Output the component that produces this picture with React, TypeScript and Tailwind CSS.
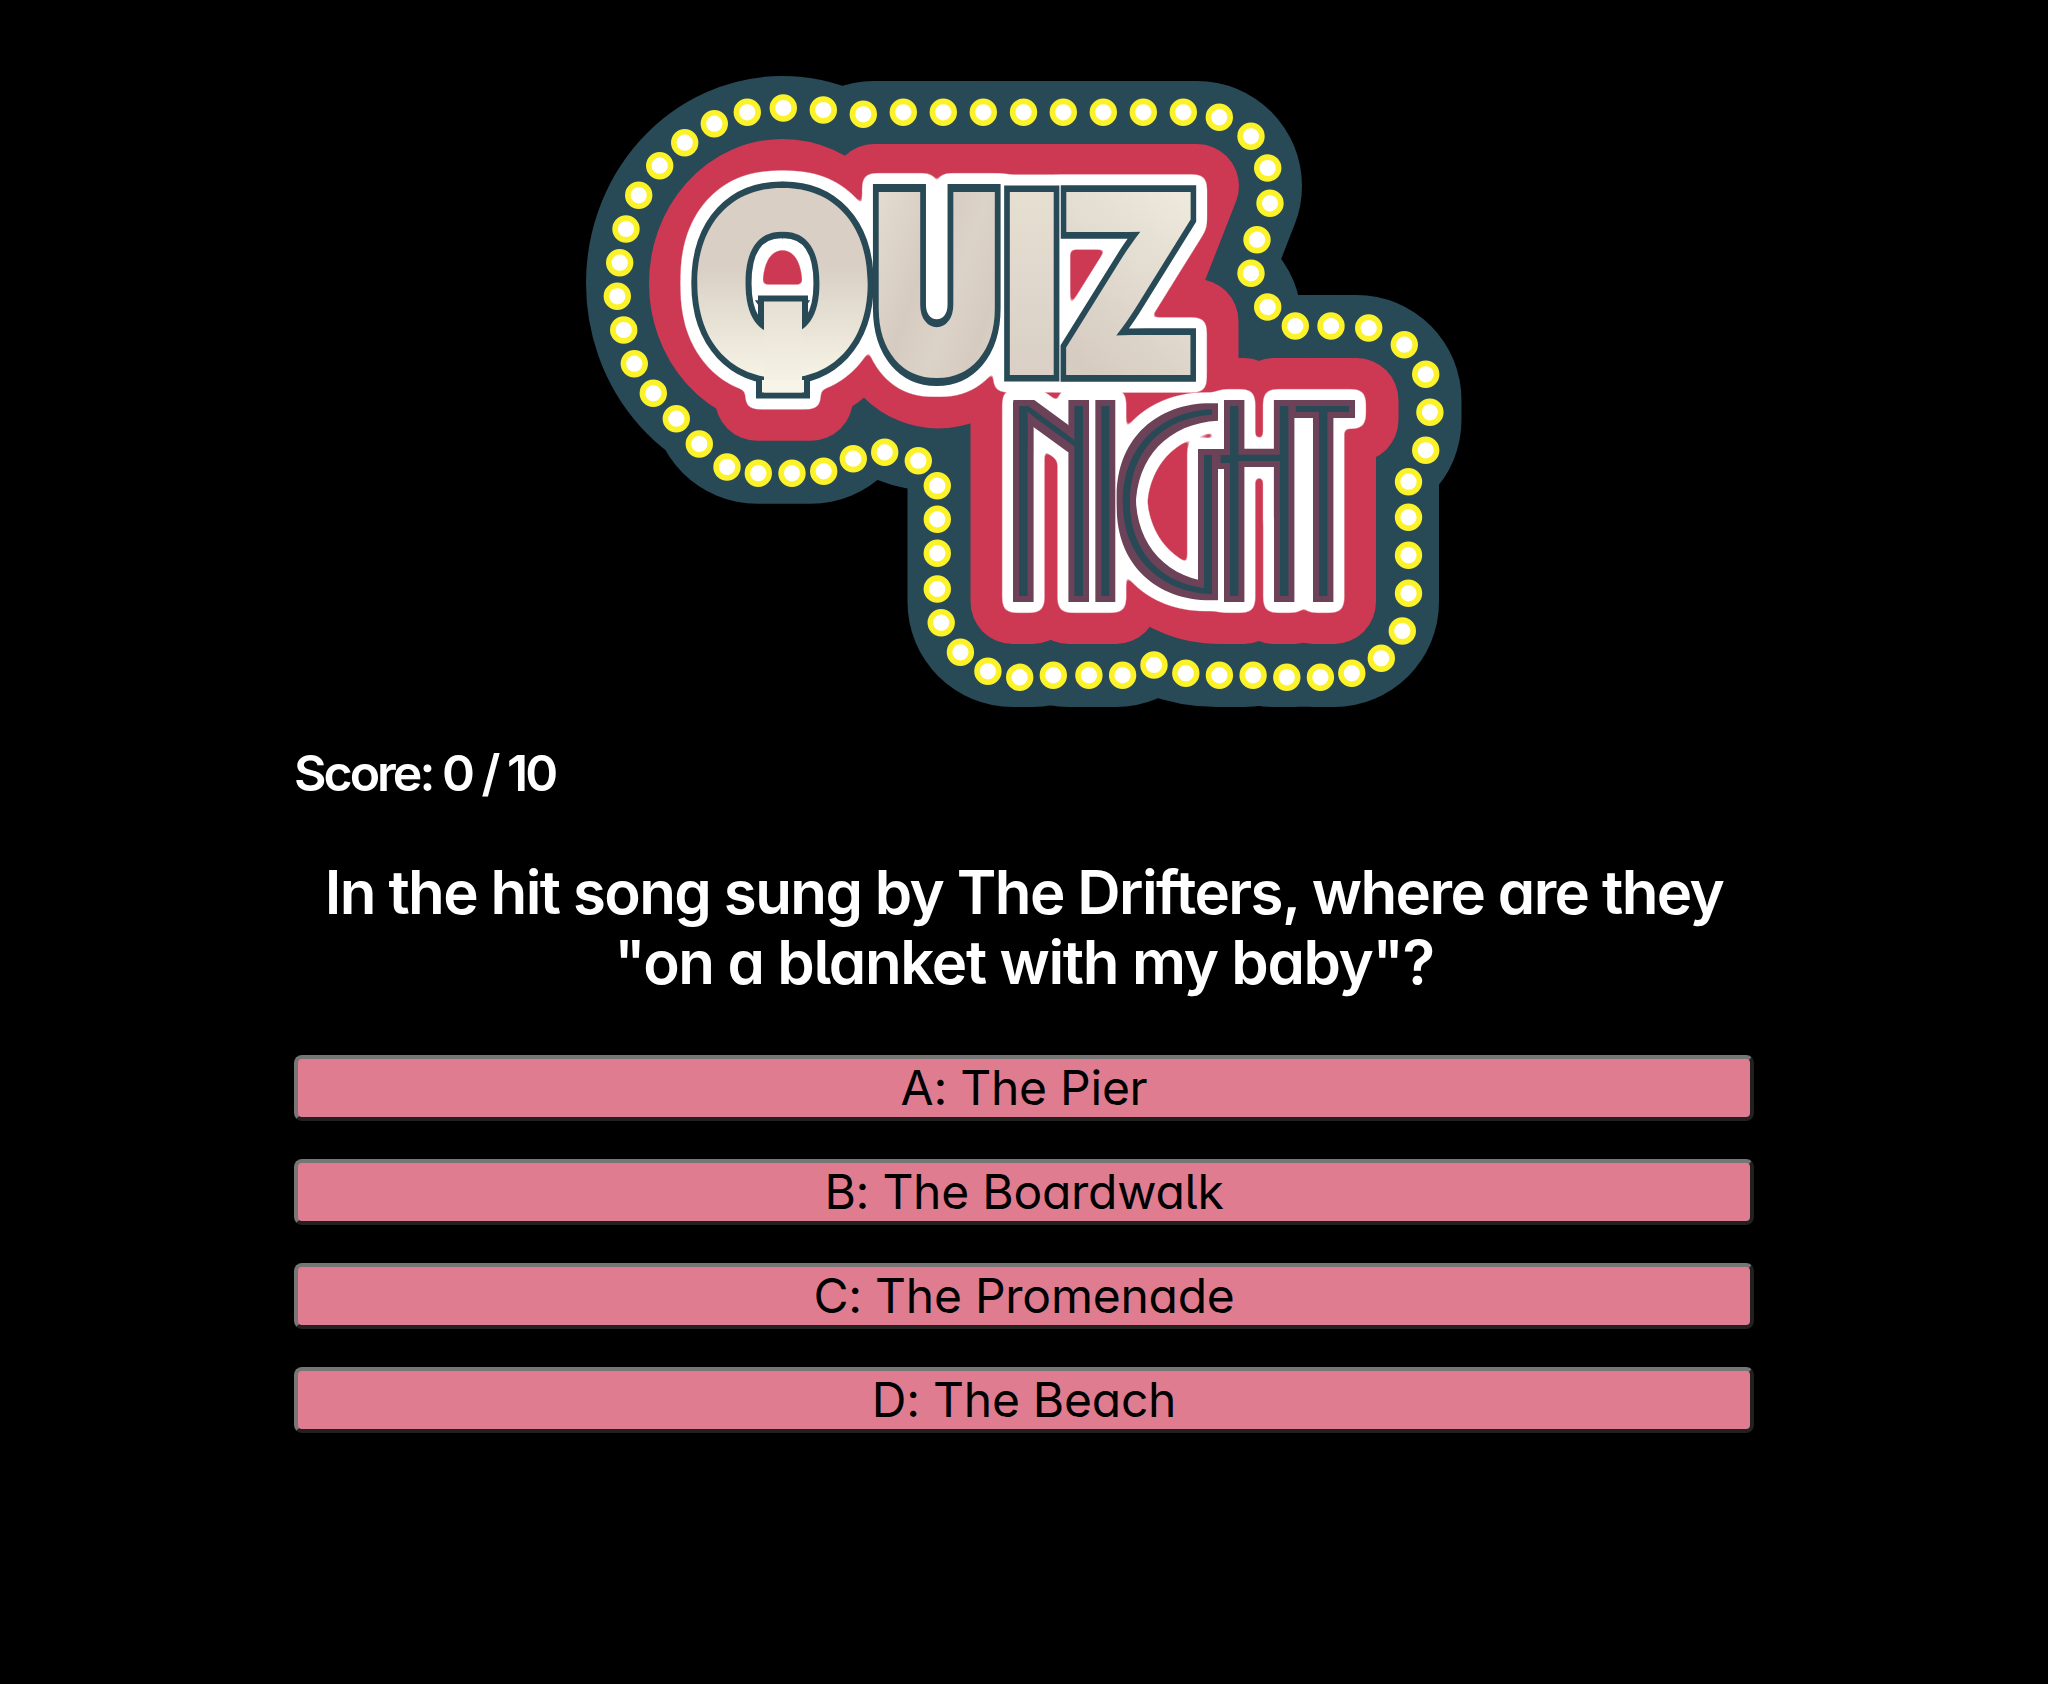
import React from "react";

const answers = ["A: The Pier", "B: The Boardwalk", "C: The Promenade", "D: The Beach"];

const bulbs: [number, number][] = [
  [783.3, 108], [823.3, 110], [863.3, 114.3], [903.3, 112.3], [943.3, 112.3], [983.3, 112.3], [1023.5, 112.3],
  [1063.3, 112.3], [1103.3, 112.3], [1143.3, 112.3], [1183.3, 112.3], [1219.3, 117.3], [1251, 136.3], [1267.7, 168],
  [1270, 203.3], [1257, 239.7], [1251, 273.3], [1267.7, 307], [1295.3, 326], [1331, 326], [1368.7, 328],
  [1404.3, 344.7], [1425.7, 374.3], [1429.9, 412.3], [1425.7, 450.3], [1408.5, 481.7], [1408.5, 517.3],
  [1408.5, 555.3], [1408.5, 593.3], [1402.3, 631], [1381.3, 658.3], [1351.8, 673.3], [1320.4, 677.3],
  [1286.8, 677.3], [1253.1, 675.3], [1219.4, 675.3], [1185.8, 673.3], [1154, 665], [1122.6, 675.3],
  [1088.9, 675.3], [1053.3, 675.3], [1019.7, 677.3], [987.9, 671.3], [960.4, 652.3], [941.2, 622.7],
  [937.3, 589], [937.3, 553.3], [937.3, 519.3], [937.3, 485.7], [918.3, 460.7], [884.7, 452.3], [853.3, 458.7],
  [823.7, 471.3], [792, 473.3], [758.3, 473.3], [727, 467], [699.3, 444], [676.3, 418.7], [653.3, 393.3],
  [634.3, 363.7], [623.7, 330], [617.3, 296.3], [619.7, 262.7], [626, 229], [638.7, 195.3], [659.7, 165.7],
  [684.7, 142.7], [714.3, 123.7], [747.3, 112.3],
];

function Logo() {
  return (
    <svg className="block h-[634px] w-[880px] font-[Inter,sans-serif]" viewBox="584 75 880 634" role="img" aria-label="Quiz Night">
      <defs>
        <g id="sign" strokeLinejoin="round">
          <ellipse cx="782.5" cy="283.3" rx="91.5" ry="102.3" />
          <rect x="757" y="290" width="54" height="108.7" />
          <path d="M874 186H1003V321A64.5 65.5 0 0 1 874 321Z" />
          <path d="M1004 186H1197L1144 321H1196.5V381.3H1004Z" />
          <rect x="1012.5" y="396" width="20" height="206" />
          <rect x="1068.7" y="400" width="47.3" height="202" />
          <ellipse cx="1218" cy="501" rx="102" ry="101" />
          <rect x="1224" y="400" width="20" height="202" />
          <rect x="1274" y="400" width="20" height="202" />
          <rect x="1294" y="400" width="62.5" height="20" />
          <rect x="1313.5" y="400" width="20.5" height="202" />
        </g>
        <linearGradient id="gQ" gradientUnits="userSpaceOnUse" x1="0" y1="-188" x2="0" y2="6">
          <stop offset="0" stopColor="#d9cfc5" />
          <stop offset="0.4" stopColor="#d9cfc4" />
          <stop offset="1" stopColor="#f7f5e7" />
        </linearGradient>
        <linearGradient id="gTail" x1="0" y1="0" x2="0" y2="1">
          <stop offset="0" stopColor="#e6dfd3" />
          <stop offset="1" stopColor="#f7f5e7" />
        </linearGradient>
        <linearGradient id="gU" x1="0" y1="0.1" x2="1" y2="0.9">
          <stop offset="0" stopColor="#e6dfd3" />
          <stop offset="0.4" stopColor="#d6cbc1" />
          <stop offset="0.6" stopColor="#dcd3c8" />
          <stop offset="0.8" stopColor="#d6cbc1" />
          <stop offset="1" stopColor="#ded6ca" />
        </linearGradient>
        <linearGradient id="gI" x1="0" y1="0" x2="0" y2="1">
          <stop offset="0" stopColor="#e9e4d6" />
          <stop offset="1" stopColor="#d6cbc1" />
        </linearGradient>
        <linearGradient id="gZ" x1="0.7" y1="0" x2="0.3" y2="1">
          <stop offset="0" stopColor="#f1eee0" />
          <stop offset="0.85" stopColor="#d6cbc1" />
          <stop offset="1" stopColor="#dcd3c8" />
        </linearGradient>
        <text id="u" transform="translate(874.2 371) scale(.725 1)" fontSize="239" fontWeight="900">U</text>
        <clipPath id="leftHalf">
          <rect x="650" y="150" width="133" height="270" />
        </clipPath>
        <clipPath id="crescent">
          <rect x="1100" y="390" width="112" height="230" />
        </clipPath>
        <filter id="quizGlow" filterUnits="userSpaceOnUse" x="640" y="140" width="620" height="300" colorInterpolationFilters="sRGB">
          <feMorphology in="SourceAlpha" operator="dilate" radius="5" />
          <feGaussianBlur stdDeviation="4.6" />
          <feComponentTransfer result="edge">
            <feFuncR type="discrete" tableValues="1" />
            <feFuncG type="discrete" tableValues="1" />
            <feFuncB type="discrete" tableValues="1" />
            <feFuncA type="linear" slope="20" intercept="-1.5" />
          </feComponentTransfer>
          <feMerge>
            <feMergeNode in="edge" />
            <feMergeNode in="SourceGraphic" />
          </feMerge>
        </filter>
        <filter id="nightGlow" filterUnits="userSpaceOnUse" x="960" y="340" width="460" height="320" colorInterpolationFilters="sRGB">
          <feMorphology in="SourceAlpha" operator="dilate" radius="6" result="fat" />
          <feFlood floodColor="#6c4258" />
          <feComposite in2="fat" operator="in" result="rim" />
          <feMorphology in="fat" operator="dilate" radius="5" />
          <feGaussianBlur stdDeviation="4.6" />
          <feComponentTransfer result="edge">
            <feFuncR type="discrete" tableValues="1" />
            <feFuncG type="discrete" tableValues="1" />
            <feFuncB type="discrete" tableValues="1" />
            <feFuncA type="linear" slope="20" intercept="-1.5" />
          </feComponentTransfer>
          <feMerge>
            <feMergeNode in="edge" />
            <feMergeNode in="rim" />
            <feMergeNode in="SourceGraphic" />
          </feMerge>
        </filter>
      </defs>

      <use href="#sign" fill="#284956" stroke="#284956" strokeWidth="210" />
      <use href="#sign" fill="#cd3853" stroke="#cd3853" strokeWidth="84" />

      {bulbs.map(([x, y], i) => (
        <circle key={i} cx={x} cy={y} r="10.9" fill="#fff" stroke="#fbf22a" strokeWidth="5.6" />
      ))}

      <g filter="url(#nightGlow)" fill="#284956" fontSize="261">
        <text transform="translate(1008.6 446) scale(.43 .21)" fontWeight="300">N</text>
        <rect x="1019" y="408" width="8.6" height="188" />
        <rect x="1074.4" y="406" width="8.6" height="190" />
        <text transform="translate(1090.3 596) scale(.44 1)" fontWeight="300">I</text>
        <g clipPath="url(#crescent)">
          <text transform="translate(1100 592) scale(1.27 1)" fontSize="248" fontWeight="100">G</text>
        </g>
        <rect x="1204" y="455" width="8" height="138" />
        <text transform="translate(1221.7 512) scale(.38 .558)" fontWeight="200">H</text>
        <rect x="1220.6" y="455" width="10" height="8" />
        <rect x="1230" y="406" width="8.4" height="190" />
        <rect x="1280" y="406" width="8.4" height="190" />
        <text transform="translate(1289.2 596) scale(.414 1)" fontWeight="100">T</text>
        <rect x="1319" y="408" width="8.4" height="188" />
      </g>

      <g filter="url(#quizGlow)" fontWeight="900" stroke="#284956" paintOrder="stroke">
        <rect x="764" y="301.5" width="38" height="90" strokeWidth="12" />
        <rect x="762" y="370" width="42" height="22.5" strokeWidth="12" />
        <g id="bowl" clipPath="url(#leftHalf)">
          <text transform="translate(689.2 376) scale(.93 1)" fontSize="255" strokeWidth="13" fill="url(#gQ)">Q</text>
        </g>
        <use href="#bowl" transform="translate(1565 0) scale(-1 1)" />
        <rect x="764" y="301.5" width="38" height="91" stroke="none" fill="url(#gTail)" />
        <rect x="762" y="380" width="42" height="12.5" stroke="none" fill="#f7f5e7" />
        <use href="#u" strokeWidth="26" fill="#284956" />
        <use href="#u" strokeWidth="10" stroke="url(#gU)" fill="url(#gU)" />
        <text transform="translate(999.6 375.3) scale(.88 1)" fontSize="252" strokeWidth="13" fill="url(#gI)">I</text>
        <text transform="translate(1055.8 375.3) scale(.83 1)" fontSize="252" strokeWidth="13.5" fill="url(#gZ)">Z</text>
      </g>
    </svg>
  );
}

export default function App() {
  return (
    <main className="flex min-h-[1684px] flex-col items-center bg-black pt-[75px] font-[Inter,sans-serif] text-white [font-feature-settings:'cv11','cv05']">
      <Logo />
      <section className="flex w-[1460px] flex-col">
        <p className="mt-[33px] text-[50px] leading-[62px] font-semibold tracking-[-3px]">Score: 0 / 10</p>
        <h1 className="mt-[53px] text-center text-[60px] leading-[70px] font-semibold">
          <span className="block tracking-[-1.6px]">In the hit song sung by The Drifters, where are they</span>
          <span className="block tracking-[-1.35px]">"on a blanket with my baby"?</span>
        </h1>
        <div className="mt-[58px] flex flex-col gap-[38px]">
          {answers.map((answer) => (
            <button
              key={answer}
              type="button"
              className="h-[66px] rounded-[8px] border-4 border-t-[#767676] border-r-[#212121] border-b-[#212121] border-l-[#767676] bg-[#df7c90] text-center text-[48px] leading-[58px] tracking-[-0.25px] text-black"
            >
              {answer}
            </button>
          ))}
        </div>
      </section>
    </main>
  );
}
